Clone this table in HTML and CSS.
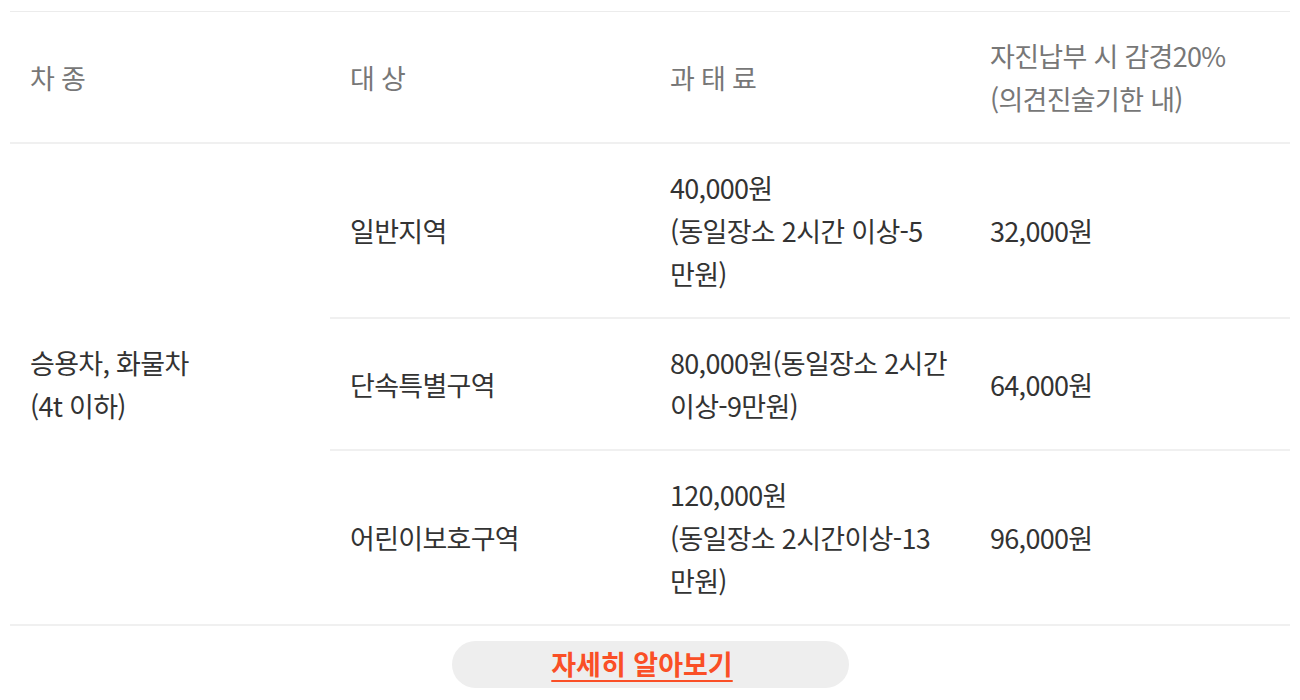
FILE: index.html
```html
<!DOCTYPE html>
<html lang="ko">
<head>
  <meta charset="UTF-8">
  <meta name="viewport" content="width=device-width, initial-scale=1.0">
  <title>주정차 위반 과태료</title>
  <link rel="stylesheet" href="styles.css">
</head>
<body>
  <div class="wrap">
    <table class="fine-table">
      <thead>
        <tr>
          <th>차 종</th>
          <th>대 상</th>
          <th>과 태 료</th>
          <th>자진납부 시 감경20%<br>(의견진술기한 내)</th>
        </tr>
      </thead>
      <tbody>
        <tr>
          <td rowspan="3">승용차, 화물차<br>(4t 이하)</td>
          <td>일반지역</td>
          <td>40,000원<br>(동일장소 2시간 이상-5<br>만원)</td>
          <td>32,000원</td>
        </tr>
        <tr>
          <td>단속특별구역</td>
          <td>80,000원(동일장소 2시간<br>이상-9만원)</td>
          <td>64,000원</td>
        </tr>
        <tr>
          <td>어린이보호구역</td>
          <td>120,000원<br>(동일장소 2시간이상-13<br>만원)</td>
          <td>96,000원</td>
        </tr>
      </tbody>
    </table>

    <div class="more">
      <a href="#" class="more-button">자세히 알아보기</a>
    </div>
  </div>
</body>
</html>
```

FILE: styles.css
```css
/* Base */
body, html {
  margin: 0;
  padding: 0;
  background-color: #fff;
  font-family: "Noto Sans CJK KR", "Noto Sans", sans-serif;
}

.wrap {
  padding: 11px 10px 0;
}

/* Table */
.fine-table {
  width: 100%;
  border-collapse: collapse;
  table-layout: fixed;
  border-top: 1px solid #ececec;
}

.fine-table th,
.fine-table td {
  padding: 22px 20px;
  text-align: left;
  vertical-align: middle;
  font-size: 27px;
  line-height: 43px;
  letter-spacing: -0.7px;
  white-space: nowrap;
  border-bottom: 2px solid #f0f0f0;
}

.fine-table th {
  font-weight: 400;
  color: #777;
}

.fine-table td {
  color: #333;
}

/* More button */
.more {
  display: flex;
  justify-content: center;
  padding-top: 15px;
}

.more-button {
  display: block;
  width: 381px;
  height: 47px;
  padding-right: 16px;
  line-height: 45px;
  text-align: center;
  background-color: #eee;
  border-radius: 24px;
  color: #fa4f26;
  font-size: 27px;
  font-weight: 700;
  letter-spacing: 0;
  text-decoration: underline;
  text-underline-offset: 5px;
  text-decoration-thickness: 2px;
}
```
